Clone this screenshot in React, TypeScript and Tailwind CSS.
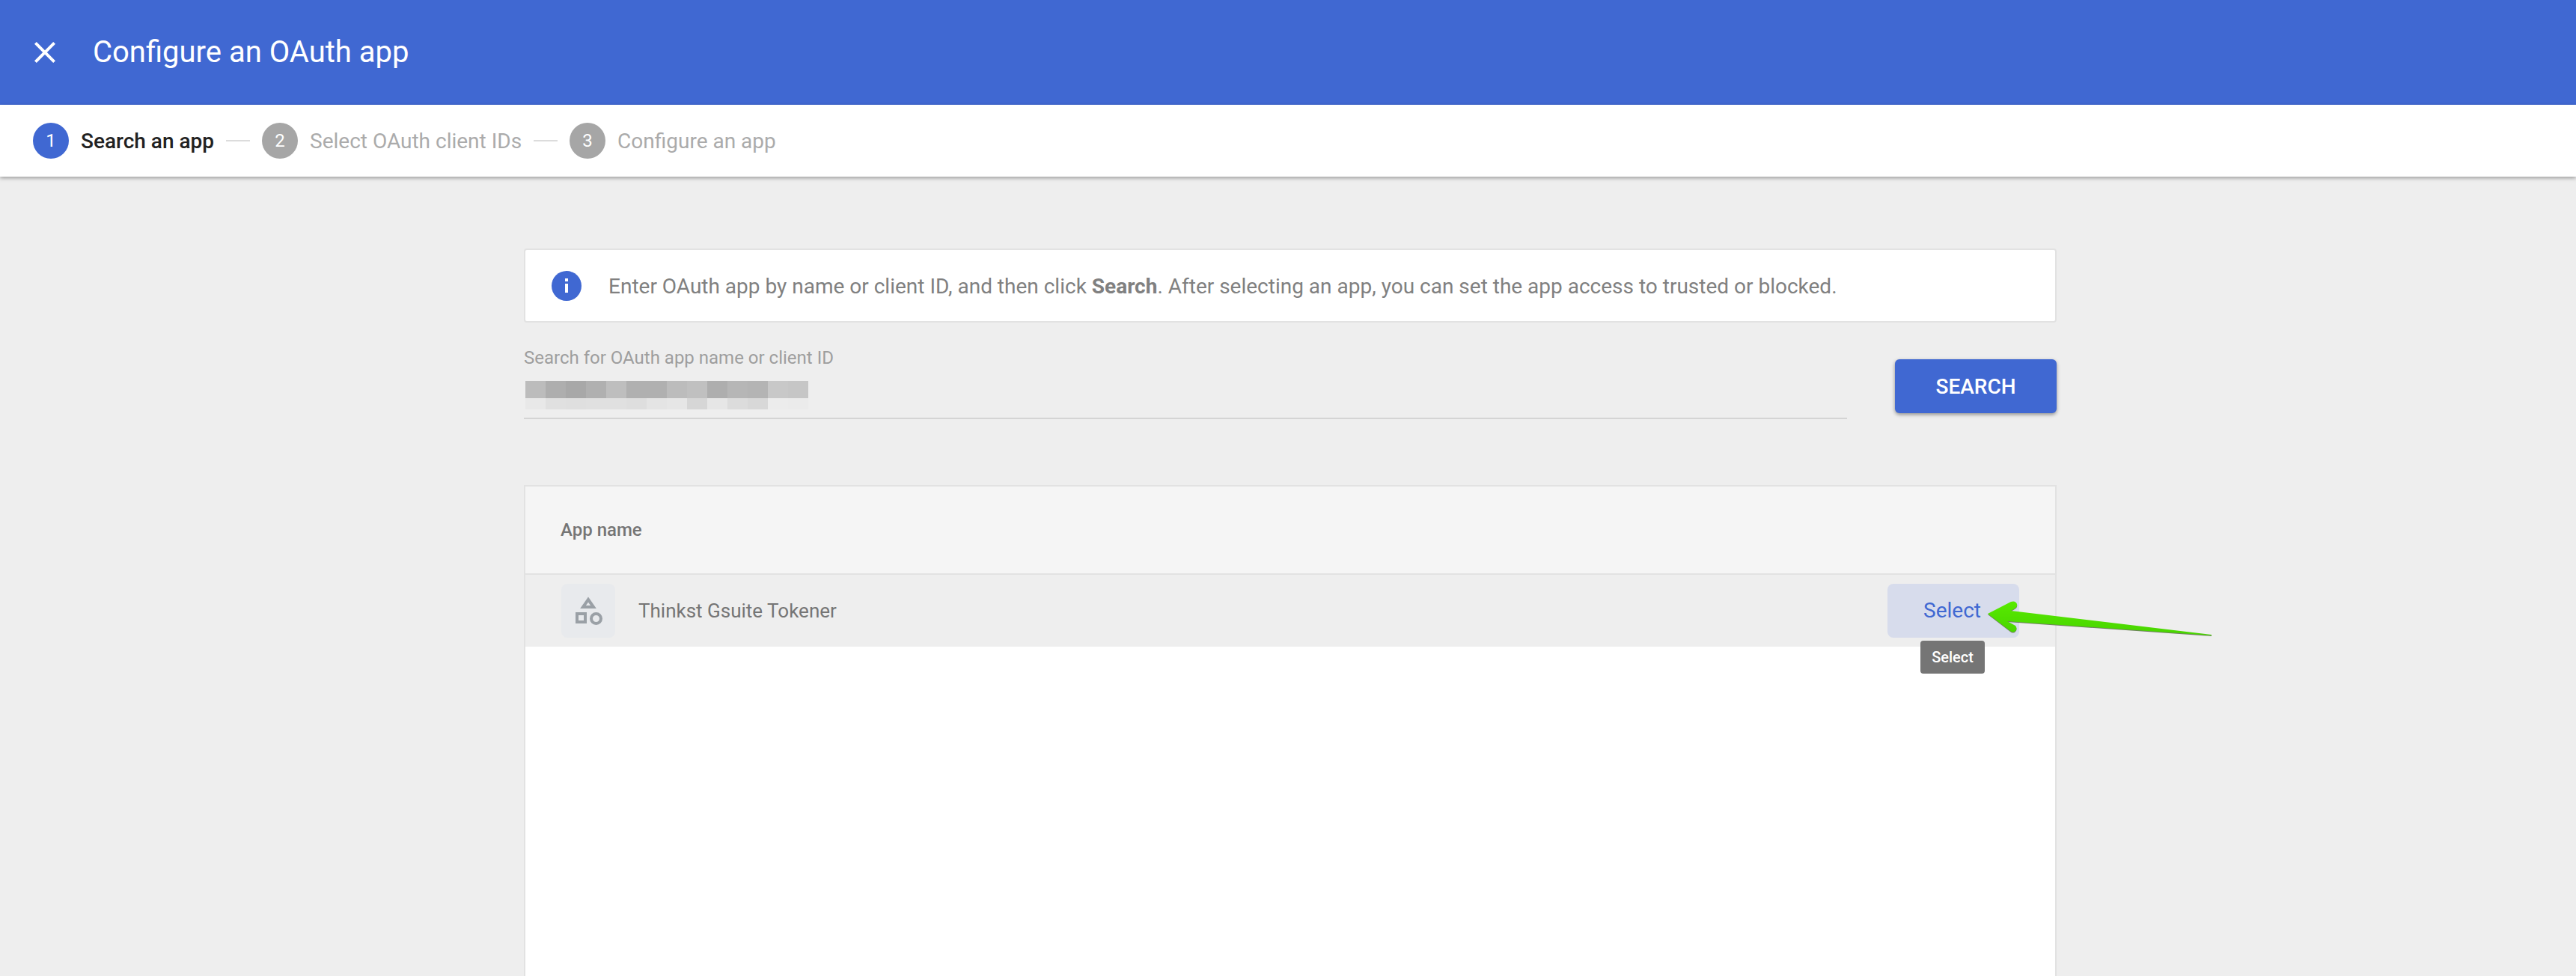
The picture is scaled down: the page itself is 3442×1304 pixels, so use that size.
import React from "react";

const steps = [
  { n: 1, label: "Search an app", active: true },
  { n: 2, label: "Select OAuth client IDs", active: false },
  { n: 3, label: "Configure an app", active: false },
];

const blurTop = ["#bcbcbc", "#aeaeae", "#a8a8a8", "#b0b0b0", "#bebebe", "#b0b0b0", "#b0b0b0", "#bcbcbc", "#c0c0c0", "#aeaeae", "#b6b6b6", "#b4b4b4", "#c8c8c8", "#c6c6c6"];
const blurBottom = ["#e8e8e8", "#e0e0e0", "#dfdfdf", "#e0e0e0", "#e0e0e0", "#dedede", "#e4e4e4", "#e6e6e6", "#d6d6d6", "#e6e6e6", "#dcdcdc", "#d8d8d8", "#ececec", "#ebebeb"];

function Stepper() {
  return (
    <div className="relative z-10 flex h-[96px] items-center bg-white pl-[44px] shadow-[0_2px_5px_rgba(0,0,0,0.35)]">
      {steps.map((step, index) => (
        <React.Fragment key={step.n}>
          {index > 0 && <div className="mx-[16px] h-[2px] w-[32px] bg-[#dcdcdc]" />}
          <div className={`flex h-[48px] w-[48px] items-center justify-center rounded-full text-[24px] text-white ${step.active ? "bg-[#4068d2]" : "bg-[#a6a6a6]"}`}>
            {step.n}
          </div>
          <span className={`ml-[16px] pt-[2px] text-[28px] ${step.active ? "font-medium text-[#212121]" : "text-[#ababab]"}`}>
            {step.label}
          </span>
        </React.Fragment>
      ))}
    </div>
  );
}

function ShapesIcon() {
  return (
    <svg width="72" height="72" viewBox="0 0 72 72" fill="none" stroke="#9aa0a6" strokeWidth="4">
      <path d="M36 21 L43 31 H29 Z" />
      <rect x="21" y="40" width="11" height="11" />
      <circle cx="46.5" cy="46.5" r="6.5" />
    </svg>
  );
}

function Arrow() {
  const d = "M2656 820 L2687 804 Q2693 802 2695 807 Q2696 811 2692 813 L2687 816 L2955 848 L2955 849 L2682 830 L2693 836 Q2696 840 2693 843 Q2690 846 2686 843 Z";
  return (
    <svg className="absolute left-[2650px] top-[800px]" width="310" height="54" viewBox="2650 800 310 54">
      <defs>
        <linearGradient id="arrowFill" x1="0" y1="0" x2="0" y2="1">
          <stop offset="0" stopColor="#58ea00" />
          <stop offset="1" stopColor="#48d400" />
        </linearGradient>
      </defs>
      <path d={d} fill="#6f7f60" transform="translate(0 1)" />
      <path d={d} fill="url(#arrowFill)" />
    </svg>
  );
}

export default function App() {
  return (
    <div className="relative h-[1304px] w-[3442px] overflow-hidden bg-[#eeeeee] font-['Roboto',sans-serif]">
      <header className="flex h-[140px] items-center bg-[#4068d2] pl-[36px] text-white">
        <svg width="48" height="48" viewBox="0 0 24 24" fill="currentColor">
          <path d="M19 6.41L17.59 5 12 10.59 6.41 5 5 6.41 10.59 12 5 17.59 6.41 19 12 13.41 17.59 19 19 17.59 13.41 12z" />
        </svg>
        <h1 className="ml-[40px] text-[40px] font-normal">Configure an OAuth app</h1>
      </header>
      <Stepper />

      <main className="ml-[700px] w-[2048px]">
        <div className="mt-[96px] flex h-[99px] w-[2048px] items-center rounded-[4px] border-2 border-[#e2e2e2] bg-white pl-[35px] text-[28px] text-[#808080]">
          <svg width="40" height="40" viewBox="0 0 40 40" className="shrink-0">
            <circle cx="20" cy="20" r="20" fill="#4068d2" />
            <rect x="18" y="17" width="4" height="12" fill="#fff" />
            <rect x="18" y="10" width="4" height="4" fill="#fff" />
          </svg>
          <p className="ml-[36px] pt-[2px]">
            Enter OAuth app by name or client ID, and then click <b className="font-bold">Search</b>. After selecting an app, you can set the app access to trusted or blocked.
          </p>
        </div>

        <div className="flex items-start">
          <div className="mt-[33px] w-[1768px] border-b-2 border-[#d4d4d4] pb-[11px]">
            <div className="text-[24px] leading-[28px] text-[#9e9e9e]">Search for OAuth app name or client ID</div>
            <div className="ml-[2px] mt-[17px] flex">
              {blurTop.map((top, index) => (
                <div key={index} className="w-[27px]">
                  <div className="h-[23px]" style={{ backgroundColor: top }} />
                  <div className="h-[15px]" style={{ backgroundColor: blurBottom[index] }} />
                </div>
              ))}
            </div>
          </div>
          <button className="ml-[64px] mt-[49px] h-[72px] w-[216px] rounded-[6px] bg-[#4068d2] pt-[2px] text-[28px] font-medium text-white shadow-[0_2px_5px_rgba(0,0,0,0.4)]">
            SEARCH
          </button>
        </div>

        <div className="mt-[88px] h-[700px] w-[2048px] border-2 border-[#e2e2e2] bg-white">
          <div className="flex h-[118px] items-center border-b-2 border-[#e2e2e2] bg-[#f5f5f5] pl-[47px] text-[24px] font-medium text-[#757575]">
            App name
          </div>
          <div className="flex h-[96px] items-center bg-[#eeeeee] pl-[48px] pr-[48px]">
            <div className="flex h-[72px] w-[72px] items-center justify-center rounded-[8px] bg-[#e8eaed]">
              <ShapesIcon />
            </div>
            <span className="ml-[31px] text-[26px] text-[#757575]">Thinkst Gsuite Tokener</span>
            <button className="ml-auto h-[72px] w-[176px] rounded-[8px] bg-[#d7dcec] pr-[3px] text-[28px] text-[#4068d2]">
              Select
            </button>
          </div>
        </div>
      </main>

      <div className="absolute left-[2566px] top-[856px] flex h-[44px] w-[86px] items-center justify-center rounded-[4px] bg-[#757575] text-[20px] font-medium text-white">
        Select
      </div>
      <Arrow />
    </div>
  );
}
